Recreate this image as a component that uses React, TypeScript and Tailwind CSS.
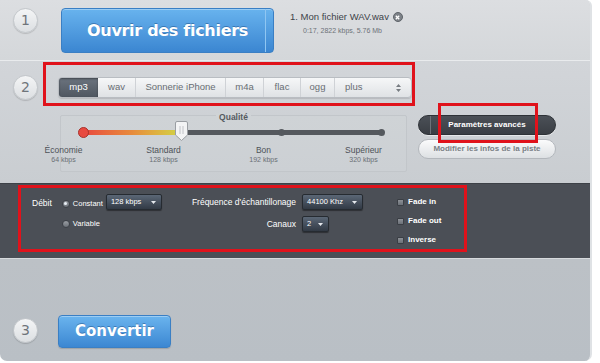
import React from "react";

const sans = { fontFamily: '"Liberation Sans", Arial, sans-serif' };
const dv = { fontFamily: '"DejaVu Sans", Verdana, sans-serif' };

function Step({ n }: { n: number }) {
  return (
    <div
      className="w-[25px] h-[25px] rounded-full flex items-center justify-center bg-gradient-to-b from-[#f4f5f6] to-[#dcdfe2] border border-[#c3c7cb] shadow-[0_1px_1px_rgba(0,0,0,0.15)] text-[14px] text-[#6f747a] shrink-0"
      style={dv}
    >
      {n}
    </div>
  );
}

function Radio({ on }: { on?: boolean }) {
  return (
    <div className="w-[8px] h-[8px] rounded-full bg-gradient-to-b from-[#9a9ea4] to-[#6c7178] border border-[#3c4047] flex items-center justify-center">
      {on && <div className="w-[3px] h-[3px] rounded-full bg-[#e8eef5]" />}
    </div>
  );
}

function Select({ label, w }: { label: string; w: string }) {
  return (
    <div
      className={`${w} h-[16px] rounded-[2px] bg-gradient-to-b from-[#5b6776] to-[#323a45] border border-[#262b31] shadow-[0_1px_1px_rgba(0,0,0,0.4)] flex items-center justify-between pl-[4px] pr-[5px] text-[7.5px] text-white`}
    >
      <span>{label}</span>
      <svg width="5" height="3" viewBox="0 0 5 3">
        <path d="M0 0 L5 0 L2.5 3 Z" fill="#e6e9ee" />
      </svg>
    </div>
  );
}

function Check({ label }: { label: string }) {
  return (
    <div className="flex items-center gap-[4px] h-[10px]">
      <div className="w-[7px] h-[7px] rounded-[1px] bg-gradient-to-b from-[#8d9197] to-[#6b7077] border border-[#3a3e44]" />
      <span className="text-[8px] font-bold text-white">{label}</span>
    </div>
  );
}

const tabs = ["wav", "Sonnerie iPhone", "m4a", "flac", "ogg"];
const tabW = ["w-[38px]", "w-[90px]", "w-[38px]", "w-[37px]", "w-[34px]"];

export default function App() {
  return (
    <div className="w-[600px] h-[363px] bg-white overflow-hidden" style={sans}>
      <div className="relative w-[592px] h-[361px] flex flex-col rounded-b-[7px] rounded-tr-[6px] overflow-hidden border-r-[2px] border-[#dfe2e5] shadow-[inset_-5px_0_0_-3px_#c2c6ca]">
        {/* Section 1 */}
        <div className="h-[61px] flex items-start pt-[8px] pl-[13px] bg-gradient-to-b from-[#dcdee1] to-[#d4d7da] border-b border-[#e9ebed]">
          <Step n={1} />
          <div
            className="relative ml-[23px] w-[213px] h-[45px] rounded-[4px] bg-gradient-to-b from-[#68b3ee] to-[#3b86d1] border border-[#3a7fc4] shadow-[inset_0_1px_0_rgba(255,255,255,0.35)] flex items-center justify-center text-white font-bold text-[16px] [text-shadow:0_-1px_0_rgba(0,40,90,0.35)]"
            style={dv}
          >
            <span className="tracking-[-0.3px]">Ouvrir des fichiers</span>
            <div className="absolute right-[7px] top-0 bottom-0 w-px bg-[#8fc6f2]" />
          </div>
          <div className="ml-[16px] pt-[4px]">
            <div className="flex items-center gap-[4px] text-[9.5px] text-[#3e4349] leading-none">
              <span>1. Mon fichier WAV.wav</span>
              <div className="w-[10px] h-[10px] rounded-full bg-[#7d8288] border border-[#5f646a] flex items-center justify-center">
                <svg width="5" height="5" viewBox="0 0 5 5">
                  <path d="M0.8 0.8 L4.2 4.2 M4.2 0.8 L0.8 4.2" stroke="white" strokeWidth="1.3" />
                </svg>
              </div>
            </div>
            <div className="ml-[13px] mt-[5px] text-[7px] text-[#6d7278] leading-none">0:17, 2822 kbps, 5.76 Mb</div>
          </div>
        </div>

        {/* Section 2 */}
        <div className="relative h-[122px] flex flex-col pt-[14px] bg-gradient-to-b from-[#d2d5d9] to-[#c9cdd1]">
          <div className="flex items-center pl-[13px]">
            <Step n={2} />
            <div className="ml-[20px] flex h-[21px] rounded-[4px] border border-[#b9bdc2] bg-gradient-to-b from-[#f6f7f8] to-[#dfe2e5] shadow-[0_1px_1px_rgba(0,0,0,0.12)] text-[9.5px] text-[#686d73] overflow-hidden">
              <div className="w-[39px] flex items-center justify-center bg-gradient-to-b from-[#6b737e] to-[#4f5761] text-white shadow-[inset_0_1px_2px_rgba(0,0,0,0.4)]">
                mp3
              </div>
              {tabs.map((t, i) => (
                <div key={t} className={`${tabW[i]} flex items-center justify-center border-r border-[#cfd2d6]`}>
                  {t}
                </div>
              ))}
              <div className="w-[76px] flex items-center justify-between pl-[10px] pr-[10px]">
                <span>plus</span>
                <svg width="5" height="8" viewBox="0 0 5 8">
                  <path d="M0 3 L2.5 0 L5 3 Z M0 5 L2.5 8 L5 5 Z" fill="#777c82" />
                </svg>
              </div>
            </div>
          </div>

          <div className="flex items-start pl-[60px] mt-[15px]">
            <div className="w-[347px] h-[57px] border border-[#c2c6ca] rounded-[2px] bg-gradient-to-b from-[#cfd3d6] to-[#ccd0d4] flex flex-col items-center">
              <div className="text-[8.5px] font-bold text-[#555a60] leading-none mt-[-3px] px-[3px] bg-[#cfd3d6]">Qualité</div>
              <div className="relative w-[300px] h-[5px] mt-[8px] rounded-full bg-[#55595e] ml-[-2px]">
                <div className="absolute left-0 top-0 h-[5px] w-[98px] rounded-l-full bg-gradient-to-r from-[#e8453e] via-[#e78b3c] to-[#cfd545]" />
                <div className="absolute left-[-5px] top-[-3px] w-[11px] h-[11px] rounded-full bg-[#e84a40] border border-[#a8322c]" />
                <div className="absolute left-[195px] top-[-1px] w-[7px] h-[7px] rounded-full bg-[#55595e]" />
                <div className="absolute left-[295px] top-[-1px] w-[7px] h-[7px] rounded-full bg-[#55595e]" />
                <svg className="absolute left-[92px] top-[-9px]" width="13" height="20" viewBox="0 0 13 20">
                  <path d="M2 0.5 H11 Q12.5 0.5 12.5 2 V14 L6.5 19.5 L0.5 14 V2 Q0.5 0.5 2 0.5 Z" fill="#f3f4f5" stroke="#9a9ea3" />
                  <path d="M5 5 V13 M8 5 V13" stroke="#b4b8bc" strokeWidth="0.8" />
                </svg>
              </div>
              <div className="flex w-[400px] ml-[-40px] mt-[11px] text-[#4d5258] leading-none">
                {[
                  ["Économie", "64 kbps"],
                  ["Standard", "128 kbps"],
                  ["Bon", "192 kbps"],
                  ["Supérieur", "320 kbps"],
                ].map(([a, b]) => (
                  <div key={a} className="w-[100px] flex flex-col items-center">
                    <span className="text-[8.5px]">{a}</span>
                    <span className="text-[7px] text-[#6a6f75] mt-[2px]">{b}</span>
                  </div>
                ))}
              </div>
            </div>
            <div className="ml-[11px] flex flex-col gap-[4px]">
              <div className="relative w-[138px] h-[20px] rounded-full bg-gradient-to-b from-[#4b5057] to-[#3a3e44] border border-[#2e3237] flex items-center justify-center text-[8px] font-bold text-white shadow-[0_1px_0_rgba(255,255,255,0.5)]">
                <div className="absolute left-[11px] top-0 bottom-0 w-px bg-[#6d7279]" />
                Paramètres avancés
              </div>
              <div className="w-[138px] h-[20px] rounded-full bg-gradient-to-b from-[#fbfbfc] to-[#dde0e3] border border-[#b3b7bc] flex items-center justify-center text-[8px] font-bold text-[#7a7f85]">
                Modifier les infos de la piste
              </div>
            </div>
          </div>

          {/* red annotation boxes */}
          <div className="absolute left-[43px] top-[1px] w-[372px] h-[44px] border-[3px] border-[#e0121b]" />
          <div className="absolute left-[438px] top-[42px] w-[100px] h-[40px] border-[3px] border-[#e0121b]" />
        </div>

        {/* Dark panel */}
        <div className="relative h-[75px] bg-[#4b4f56] border-t border-[#3d4147] flex items-start pt-[10px] text-white">
          <div className="flex items-start pl-[32px]">
            <span className="text-[8.5px] mt-[3px]">Débit</span>
            <div className="ml-[10px] flex flex-col gap-[9px] mt-[4px]">
              <div className="flex items-center gap-[3px]">
                <Radio on />
                <span className="text-[7.5px]">Constant</span>
              </div>
              <div className="flex items-center gap-[3px]">
                <Radio />
                <span className="text-[7.5px]">Variable</span>
              </div>
            </div>
            <div className="ml-[3px]">
              <Select label="128 kbps" w="w-[56px]" />
            </div>
          </div>

          <div className="ml-[30px] grid grid-cols-[auto_auto] gap-x-[6px] gap-y-[6px] items-center">
            <span className="text-[8.5px] text-right">Fréquence d'échantillonage</span>
            <Select label="44100 Khz" w="w-[61px]" />
            <span className="text-[8.5px] text-right">Canaux</span>
            <Select label="2" w="w-[27px]" />
          </div>

          <div className="ml-[34px] mt-[3px] flex flex-col gap-[9px]">
            <Check label="Fade in" />
            <Check label="Fade out" />
            <Check label="Inverse" />
          </div>

          <div className="absolute left-[18px] top-[1px] w-[449px] h-[67px] border-[3px] border-[#e0121b]" />
        </div>

        {/* Section 3 */}
        <div className="flex-1 flex items-end pb-[13px] pl-[13px] bg-gradient-to-b from-[#bcc1c6] to-[#b9bfc5] border-t border-[#d7dadd]">
          <div className="mb-[5px]">
            <Step n={3} />
          </div>
          <div
            className="ml-[20px] w-[113px] h-[33px] rounded-[4px] bg-gradient-to-b from-[#6ab4ee] to-[#3c87d2] border border-[#3a7fc4] shadow-[inset_0_1px_0_rgba(255,255,255,0.35),0_1px_1px_rgba(0,0,0,0.15)] flex items-center justify-center text-white font-bold text-[15px] [text-shadow:0_-1px_0_rgba(0,40,90,0.35)]"
            style={dv}
          >
            Convertir
          </div>
        </div>
      </div>
    </div>
  );
}
